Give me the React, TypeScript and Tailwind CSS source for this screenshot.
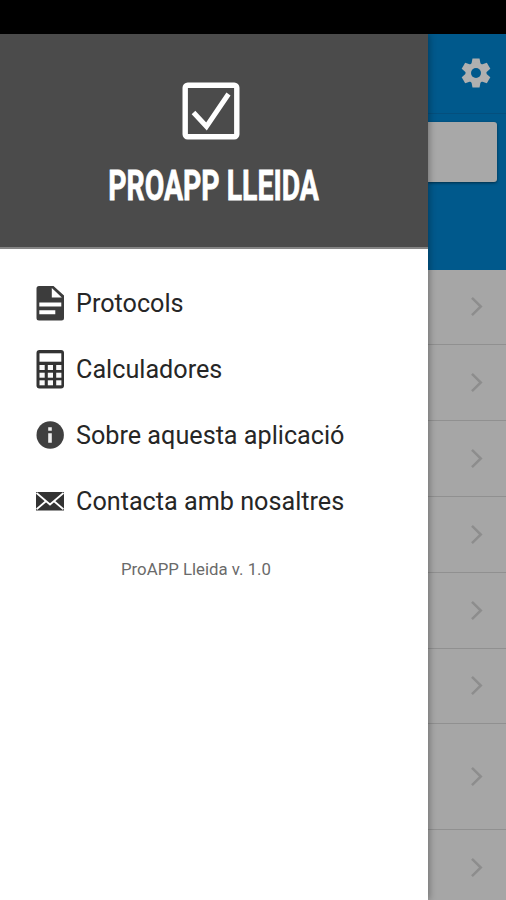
import { ReactNode } from 'react'

const menuItems: { label: string; icon: ReactNode }[] = [
  {
    label: 'Protocols',
    icon: (
      <svg width="28" height="36" viewBox="0 0 28 36" fill="#3c3c3c">
        <path
          fillRule="evenodd"
          d="M3 1H17.500l10.500 9.500V33a2.500 2.500 0 0 1-2.500 2.500H3A2.500 2.500 0 0 1 .5 33V3.500A2.500 2.500 0 0 1 3 1ZM15.800 3v9.500H25.800ZM3.300 17.500v4h22v-4ZM3.300 25.200v4h16v-4Z"
        />
      </svg>
    ),
  },
  {
    label: 'Calculadores',
    icon: (
      <svg width="28" height="40" viewBox="0 0 28 40">
        <rect x="0.500" y="1" width="27.500" height="38.500" rx="3" fill="#333" />
        <rect x="3.500" y="4.300" width="21.800" height="8.400" fill="#fff" />
        {[16, 23.7, 31.3].map((y) =>
          [3.5, 11.8, 20.2].map((x) => <rect key={`${x}-${y}`} x={x} y={y} width="5.200" height="5" fill="#fafafa" />)
        )}
      </svg>
    ),
  },
  {
    label: 'Sobre aquesta aplicació',
    icon: (
      <svg width="28" height="28" viewBox="0 0 28 28">
        <circle cx="14.200" cy="14" r="13.700" fill="#404040" />
        <path d="M12.200 6.300h3.600v3.400h-3.600ZM12.200 12.200h3.600v9.500h-3.600Z" fill="#eee" />
      </svg>
    ),
  },
  {
    label: 'Contacta amb nosaltres',
    icon: (
      <svg width="28" height="20" viewBox="0 0 28 20">
        <rect x="0" y="1" width="28" height="18.500" fill="#333" />
        <path d="M.5 2 14 13.500 27.500 2M.5 18.200 10.200 10M27.500 18.200 17.800 10" fill="none" stroke="#fff" strokeWidth="1.800" />
      </svg>
    ),
  },
]

const rows = ['h-[75px]', 'h-[76px]', 'h-[76px]', 'h-[76px]', 'h-[76px]', 'h-[75px]', 'h-[106px]', 'h-[76px]']

function Drawer() {
  return (
    <aside className="relative z-10 flex w-[428px] shrink-0 flex-col bg-white shadow-[1px_0_7px_rgba(0,0,0,0.35)]">
      <div className="flex h-[215px] shrink-0 flex-col items-center border-b-2 border-[#858585] bg-[#4b4b4b] pt-12">
        <div className="flex w-full justify-center pr-[6px]">
          <svg width="58" height="58" viewBox="0 0 58 58" fill="none" stroke="#fff">
            <rect x="3.200" y="3.200" width="51.600" height="51.600" rx="2.500" strokeWidth="5.400" />
            <path d="m11.500 30.500 13 14L46.500 12" strokeWidth="5" />
          </svg>
        </div>
        <h1 className="mt-[18px] flex h-[54px] w-full items-center justify-center">
          <span className="inline-block scale-x-[0.66] whitespace-nowrap text-[43px] leading-none font-bold text-white [-webkit-text-stroke:0.8px_white]">
            PROAPP LLEIDA
          </span>
        </h1>
      </div>

      <nav className="pt-[21px] pl-9">
        {menuItems.map((item) => (
          <div key={item.label} className="flex h-[66px] items-center gap-3">
            <span className="flex w-7 shrink-0 justify-center">{item.icon}</span>
            <span className="whitespace-nowrap pt-0.5 text-[25.2px] leading-none text-[#262626]">{item.label}</span>
          </div>
        ))}
      </nav>
      <p className="mt-[23px] pr-9 text-center text-[16.800px] leading-6 text-[#6a6a6a]">ProAPP Lleida v. 1.0</p>
    </aside>
  )
}

function Gear() {
  return (
    <svg width="30" height="30" viewBox="-15 -15 30 30" fill="#b0b0b0">
      {[0, 60, 120].map((angle) => (
        <path key={angle} transform={`rotate(${angle})`} d="M-3.500-14.500h7l1.200 6v17l-1.200 6h-7l-1.200-6v-17Z" />
      ))}
      <circle r="10.500" />
      <circle r="5" fill="#00598c" />
    </svg>
  )
}

function Chevron() {
  return (
    <svg width="13" height="22" viewBox="0 0 13 22" fill="none" stroke="#8d8d8d" strokeWidth="2.500">
      <path d="m2 1.800 8.800 8.700L2 19.200" />
    </svg>
  )
}

export default function App() {
  return (
    <div
      className="flex h-[900px] w-[506px] flex-col overflow-hidden bg-black"
      style={{ fontFamily: 'Roboto, "Liberation Sans", sans-serif' }}
    >
      <div className="h-[34px] shrink-0 bg-black" />
      <div className="flex min-h-0 flex-1">
        <Drawer />
        <main className="flex min-w-0 flex-1 flex-col overflow-hidden bg-[#a6a6a6]">
          <header className="flex h-20 shrink-0 items-center justify-end border-b border-[#044f7d] bg-[#00598c] pr-[15px] pb-0.5">
            <Gear />
          </header>
          <section className="h-[156px] shrink-0 bg-[#00598c] pt-2 pr-[9px]">
            <div className="h-[60px] rounded-r-[3px] bg-[#a8a8a8] shadow-[0_1px_3px_rgba(0,0,0,0.5)]" />
          </section>
          {rows.map((height, i) => (
            <div key={i} className={`flex shrink-0 items-center justify-end border-b border-[#909090] pr-[23px] ${height}`}>
              <Chevron />
            </div>
          ))}
        </main>
      </div>
    </div>
  )
}
